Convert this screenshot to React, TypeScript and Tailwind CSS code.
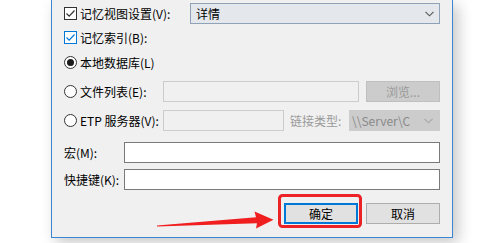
const font = { fontFamily: '"Noto Sans CJK SC", "Noto Sans", sans-serif' };

function Check({ blue }: { blue?: boolean }) {
  const c = blue ? "#0078d7" : "#333333";
  return (
    <span
      className={`flex h-[13px] w-[13px] shrink-0 items-center justify-center border bg-white ${
        blue ? "border-[#0078d7]" : "border-[#333333]"
      }`}
    >
      <svg width="11" height="11" viewBox="0 0 11 11">
        <polyline points="1.5,5.5 4.2,8.2 9.5,2.5" fill="none" stroke={c} strokeWidth="1.2" />
      </svg>
    </span>
  );
}

function Radio({ on }: { on?: boolean }) {
  return (
    <span className="flex h-[13px] w-[13px] shrink-0 items-center justify-center rounded-full border border-[#333333] bg-white">
      {on && <span className="h-[7px] w-[7px] rounded-full bg-[#1a1a1a]" />}
    </span>
  );
}

function Chevron({ color }: { color: string }) {
  return (
    <svg width="9" height="6" viewBox="0 0 9 6">
      <polyline points="0.5,0.8 4.5,4.8 8.5,0.8" fill="none" stroke={color} strokeWidth="1.1" />
    </svg>
  );
}

export default function App() {
  return (
    <div className="relative h-[243px] w-[494px] overflow-hidden bg-white text-[12px] text-black" style={font}>
      <div className="pl-[51px]">
        <div className="flex w-[402px] flex-col border-x border-b border-[#3c85d1] bg-[#f0f0f0] pb-[13px] pl-[12px] pr-[12px] pt-[3px] shadow-[5px_5px_14px_rgba(0,0,0,0.22)]">
          {/* 记忆视图设置 */}
          <div className="flex h-[21px] items-center">
            <Check />
            <span className="ml-[3px] leading-none">记忆视图设置(V):</span>
            <div className="ml-auto flex h-[21px] w-[250px] items-center border border-[#8ea3b8] bg-[#e4e8ec] pl-[5px] pr-[5px]">
              <span className="leading-none">详情</span>
              <span className="ml-auto">
                <Chevron color="#555555" />
              </span>
            </div>
          </div>

          <div className="mt-[3px] flex h-[21px] items-center">
            <Check blue />
            <span className="ml-[3px] leading-none">记忆索引(B):</span>
          </div>

          <div className="mt-[4px] flex h-[21px] items-center">
            <Radio on />
            <span className="ml-[3px] leading-none">本地数据库(L)</span>
          </div>

          <div className="mt-[8px] flex h-[21px] items-center">
            <Radio />
            <span className="ml-[3px] leading-none">文件列表(E):</span>
            <div className="ml-auto h-[21px] w-[196px] border border-[#cccccc] bg-[#f0f0f0]" />
            <div className="ml-[7px] flex h-[21px] w-[74px] items-center justify-center border border-[#bfbfbf] bg-[#cccccc] leading-none text-[#9a9a9a]">
              浏览...
            </div>
          </div>

          <div className="mt-[8px] flex h-[21px] items-center">
            <Radio />
            <span className="ml-[3px] leading-none">ETP 服务器(V):</span>
            <div className="ml-auto h-[21px] w-[121px] border border-[#cccccc] bg-[#f0f0f0]" />
            <span className="ml-[6px] w-[59px] leading-none text-[#9a9a9a]">链接类型:</span>
            <div className="flex h-[21px] w-[91px] items-center border border-[#cccccc] bg-[#cccccc] pl-[2px] pr-[6px] leading-none text-[#8a8a8a]">
              <span>\\Server\C</span>
              <span className="ml-auto">
                <Chevron color="#a8a8a8" />
              </span>
            </div>
          </div>

          <div className="mt-[11px] flex h-[21px] items-center">
            <span className="leading-none">宏(M):</span>
            <div className="ml-auto h-[21px] w-[316px] border border-[#7a7a7a] bg-white" />
          </div>

          <div className="mt-[6px] flex h-[21px] items-center">
            <span className="leading-none">快捷键(K):</span>
            <div className="ml-auto h-[21px] w-[316px] border border-[#7a7a7a] bg-white" />
          </div>

          <div className="mt-[13px] flex h-[21px] items-center justify-end gap-[8px]">
            <button className="flex h-[21px] w-[74px] items-center justify-center border-2 border-[#0078d7] bg-[#e1e1e1] leading-none">
              确定
            </button>
            <button className="flex h-[21px] w-[74px] items-center justify-center border border-[#adadad] bg-[#e1e1e1] leading-none">
              取消
            </button>
          </div>
        </div>
      </div>

      {/* annotation: red arrow and highlight box */}
      <svg className="pointer-events-none absolute left-0 top-0" width="494" height="243" viewBox="0 0 494 243">
        <polygon
          points="157,225.6 256,217.2 254.5,211.5 273.5,219.8 256,228.5 257,223.2 157,226.6"
          fill="#f01e1e"
        />
        <rect x="279.5" y="195.5" width="81" height="31" rx="3" fill="none" stroke="#ec2226" strokeWidth="3" />
      </svg>
    </div>
  );
}
